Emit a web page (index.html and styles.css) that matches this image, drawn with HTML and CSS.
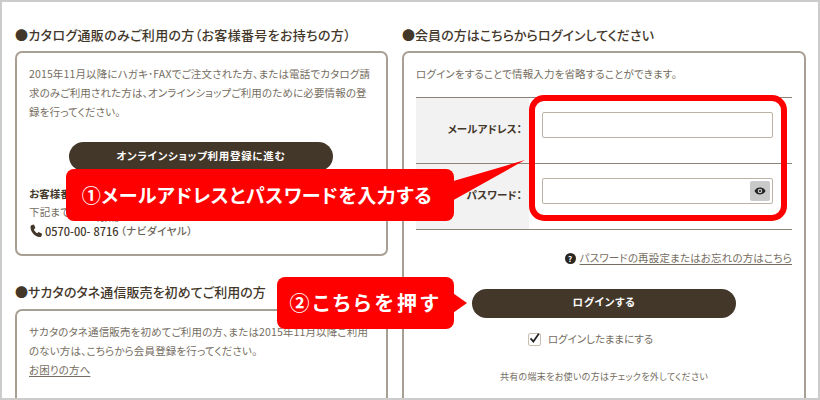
FILE: index.html
```html
<!DOCTYPE html>
<html lang="ja">
<head>
  <meta charset="UTF-8">
  <title>ログイン</title>
  <link rel="stylesheet" href="styles.css">
</head>
<body>

<div id="page">
  <div class="col colLeft">
    <h2 class="heading headingCatalog">●カタログ通販のみご利用の方（お客様番号をお持ちの方）</h2>
    <div class="panel panelCatalog">
      <p class="copy">2015年11月以降にハガキ･FAXでご注文された方、または電話でカタログ請<br>求のみご利用された方は、オンラインショップご利用のために必要情報の登<br>録を行ってください。</p>
      <a class="pill pillCatalog">オンラインショップ利用登録に進む</a>
      <p class="customer">お客様番号がご不明の方</p>
      <p class="copy">下記までお問い合わせください。</p>
      <p class="tel">
        <svg class="telIcon" viewBox="0 0 24 24"><path d="M5 1.500 8.500 1l2.500 6-2.600 2.200c.9 3 2.800 5.200 5.600 6.600l2.400-2.300 6 3-.8 3.500c-.4 1.500-1.800 2.500-3.400 2.300C9.800 21.200 2.800 13.500 2.600 5.400 2.600 3.500 3.500 2 5 1.500z"/></svg>
        <span>0570-00-</span>
        <span class="ruby" data-kana="ナビダイヤル">8716</span>
        <span class="telNote">（ナビダイヤル）</span>
      </p>
    </div>

    <h2 class="heading headingNew">●サカタのタネ通信販売を初めてご利用の方</h2>
    <div class="panel panelNew">
      <p class="copy">サカタのタネ通信販売を初めてご利用の方、または2015年11月以降ご利用<br>のない方は、こちらから会員登録を行ってください。<br><a class="link">お困りの方へ</a></p>
    </div>
  </div>

  <div class="col colRight">
    <h2 class="heading">●会員の方はこちらからログインしてください</h2>
    <div class="panel panelLogin">
      <p class="copy">ログインをすることで情報入力を省略することができます。</p>
      <div class="loginForm">
        <div class="formRow">
          <div class="formLabel">メールアドレス：</div>
          <div class="formField"><div class="textBox"></div></div>
        </div>
        <div class="formRow">
          <div class="formLabel">パスワード：</div>
          <div class="formField">
            <div class="textBox">
              <span class="eyeBtn">
                <svg class="eyeIcon" viewBox="0 0 24 16"><path fill-rule="evenodd" d="M12 1C6.500 1 2.500 4.500 1 8c1.500 3.500 5.500 7 11 7s9.500-3.500 11-7c-1.500-3.500-5.500-7-11-7zm0 2.500a4.500 4.500 0 1 1 0 9 4.500 4.500 0 0 1 0-9zm0 2.300a2.200 2.200 0 1 0 0 4.400 2.200 2.200 0 0 0 0-4.400z"/></svg>
              </span>
            </div>
          </div>
        </div>
      </div>
      <p class="forgot">
        <span class="helpIcon">?</span>
        <a class="link">パスワードの再設定またはお忘れの方はこちら</a>
      </p>
      <a class="pill pillLogin">ログインする</a>
      <div class="keep">
        <span class="checkBox">
          <svg class="checkIcon" viewBox="0 0 14 14"><path d="M2 7.500 5.500 11.500 12.500 1.500" fill="none" stroke="#222" stroke-width="2.200"/></svg>
        </span>
        ログインしたままにする
      </div>
      <p class="shared">共有の端末をお使いの方はチェックを外してください</p>
    </div>
  </div>

  <!-- annotations on top of the screenshot -->
  <div class="redFrame"></div>
  <svg class="tails" viewBox="0 0 820 400">
    <polygon points="450,182 525,160 450,202"/>
    <polygon points="450,291 467,303 450,315"/>
  </svg>
  <div class="callout calloutInput">①メールアドレスとパスワードを入力する</div>
  <div class="callout calloutPush">②こちらを押す</div>
</div>

</body>
</html>
```

FILE: styles.css
```css
* { margin: 0; padding: 0; box-sizing: border-box; }
html, body { width: 100%; height: 100%; overflow: hidden; background: #fff; }
body {
  font-family: "Noto Sans CJK JP", "Noto Sans", sans-serif;
  font-feature-settings: "palt";
  color: #756d61;
}

#page {
  position: relative;
  width: 820px;
  height: 400px;
  padding: 0 12px 0 13px;
  border: 2px solid #ccc;
  background: #fff;
  display: flex;
  gap: 14px;
  overflow: hidden;
}

.col { flex: none; }
.colLeft { width: 373px; }
.colRight { width: 404px; }

.heading {
  height: 49px;
  padding-top: 23px;
  font-size: 13px;
  line-height: 20px;
  font-weight: 500;
  letter-spacing: 0.05px;
  color: #43372a;
  white-space: nowrap;
}
.headingCatalog { letter-spacing: 0.33px; }
.headingNew { height: 53px; padding-top: 26px; }

.panel {
  border: 2px solid #a89f93;
  border-radius: 7px;
  background: #fff;
  padding: 11px 12px;
}
.panelCatalog { height: 205px; }
.panelNew { height: 120px; }
.panelLogin { height: 400px; }

.copy {
  font-size: 10.500px;
  line-height: 19px;
  letter-spacing: 0.14px;
  white-space: nowrap;
}

.pill {
  display: block;
  border-radius: 15px;
  background: #43372a;
  color: #fff;
  font-size: 10.500px;
  font-weight: 700;
  letter-spacing: 0.7px;
  text-align: center;
}
.pillCatalog {
  width: 264px;
  height: 29px;
  line-height: 28px;
  margin: 21px 0 0 40px;
}
.pillLogin {
  width: 264px;
  height: 29px;
  line-height: 26px;
  margin: 22px 0 0 56px;
}

.customer {
  margin-top: 15px;
  font-size: 10.500px;
  line-height: 16px;
  font-weight: 700;
  color: #43372a;
}

.tel {
  display: flex;
  align-items: center;
  margin-top: 1px;
  font-size: 11px;
  line-height: 18px;
  font-weight: 500;
  color: #43372a;
  white-space: nowrap;
}
.telIcon { width: 14px; height: 14px; margin-right: 2px; fill: #43372a; }
.ruby { position: relative; margin-left: 3px; }
.ruby::before {
  content: attr(data-kana);
  position: absolute;
  left: 3px;
  top: -5px;
  font-size: 4px;
  line-height: 6px;
}
.telNote { margin-left: 2px; font-size: 10.500px; letter-spacing: 0.5px; color: #6b6357; }

.link {
  color: #756d61;
  text-decoration: underline;
  text-underline-offset: 2px;
}

.loginForm {
  margin-top: 14px;
  border-top: 1px solid #8a8378;
}
.formRow {
  display: flex;
  height: 66px;
  border-bottom: 1px solid #8a8378;
}
.formLabel {
  width: 113px;
  padding: 22px 7px 0 0;
  background: #f2f2f2;
  font-size: 10.500px;
  line-height: 18px;
  font-weight: 700;
  letter-spacing: 0.1px;
  color: #43372a;
  text-align: right;
}
.formField { flex: 1; padding: 14px 19px 0 13px; }
.textBox {
  display: flex;
  justify-content: flex-end;
  align-items: center;
  height: 26px;
  padding-right: 2px;
  border: 1px solid #bcb3a6;
  border-radius: 2px;
  background: #fff;
}
.eyeBtn {
  display: flex;
  align-items: center;
  justify-content: center;
  width: 20px;
  height: 20px;
  border-radius: 2px;
  background: #c9c9c9;
}
.eyeIcon { width: 12px; height: 8px; fill: #222; }

.forgot {
  display: flex;
  justify-content: flex-end;
  align-items: center;
  gap: 4px;
  margin-top: 19px;
  font-size: 10.500px;
  line-height: 18px;
  letter-spacing: 0.17px;
}
.helpIcon {
  width: 11px;
  height: 11px;
  border-radius: 50%;
  background: #2b2620;
  color: #fff;
  font-size: 8px;
  line-height: 11px;
  font-weight: 700;
  text-align: center;
  letter-spacing: 0;
}

.keep {
  display: flex;
  align-items: center;
  justify-content: center;
  gap: 7px;
  margin: 13px 27px 0 0;
  font-size: 10.500px;
  line-height: 16px;
  letter-spacing: 0;
}
.checkBox {
  display: flex;
  align-items: center;
  justify-content: center;
  width: 13px;
  height: 13px;
  border: 1px solid #c9bfb0;
  border-radius: 2px;
}
.checkIcon { width: 12px; height: 12px; margin-top: -3px; }

.shared {
  margin: 22px 0 0;
  font-size: 9px;
  line-height: 16px;
  letter-spacing: 0.3px;
  text-align: center;
}

/* annotations */
.redFrame {
  position: absolute;
  left: 527px;
  top: 93px;
  width: 258px;
  height: 126px;
  border: 6px solid #f00;
  border-radius: 15px;
}
.tails {
  position: absolute;
  left: -2px;
  top: -2px;
  width: 820px;
  height: 400px;
  fill: #f00;
}
.callout {
  position: absolute;
  display: flex;
  align-items: center;
  justify-content: center;
  height: 52px;
  padding-bottom: 2px;
  border-radius: 8px;
  background: #f00;
  color: #fff;
  font-size: 19px;
  font-weight: 700;
  letter-spacing: 0.6px;
  white-space: nowrap;
}
.calloutInput { left: 64px; top: 167px; width: 388px; padding-right: 6px; }
.calloutPush { left: 275px; top: 275px; width: 177px; font-size: 20px; letter-spacing: 3.300px; }
```
